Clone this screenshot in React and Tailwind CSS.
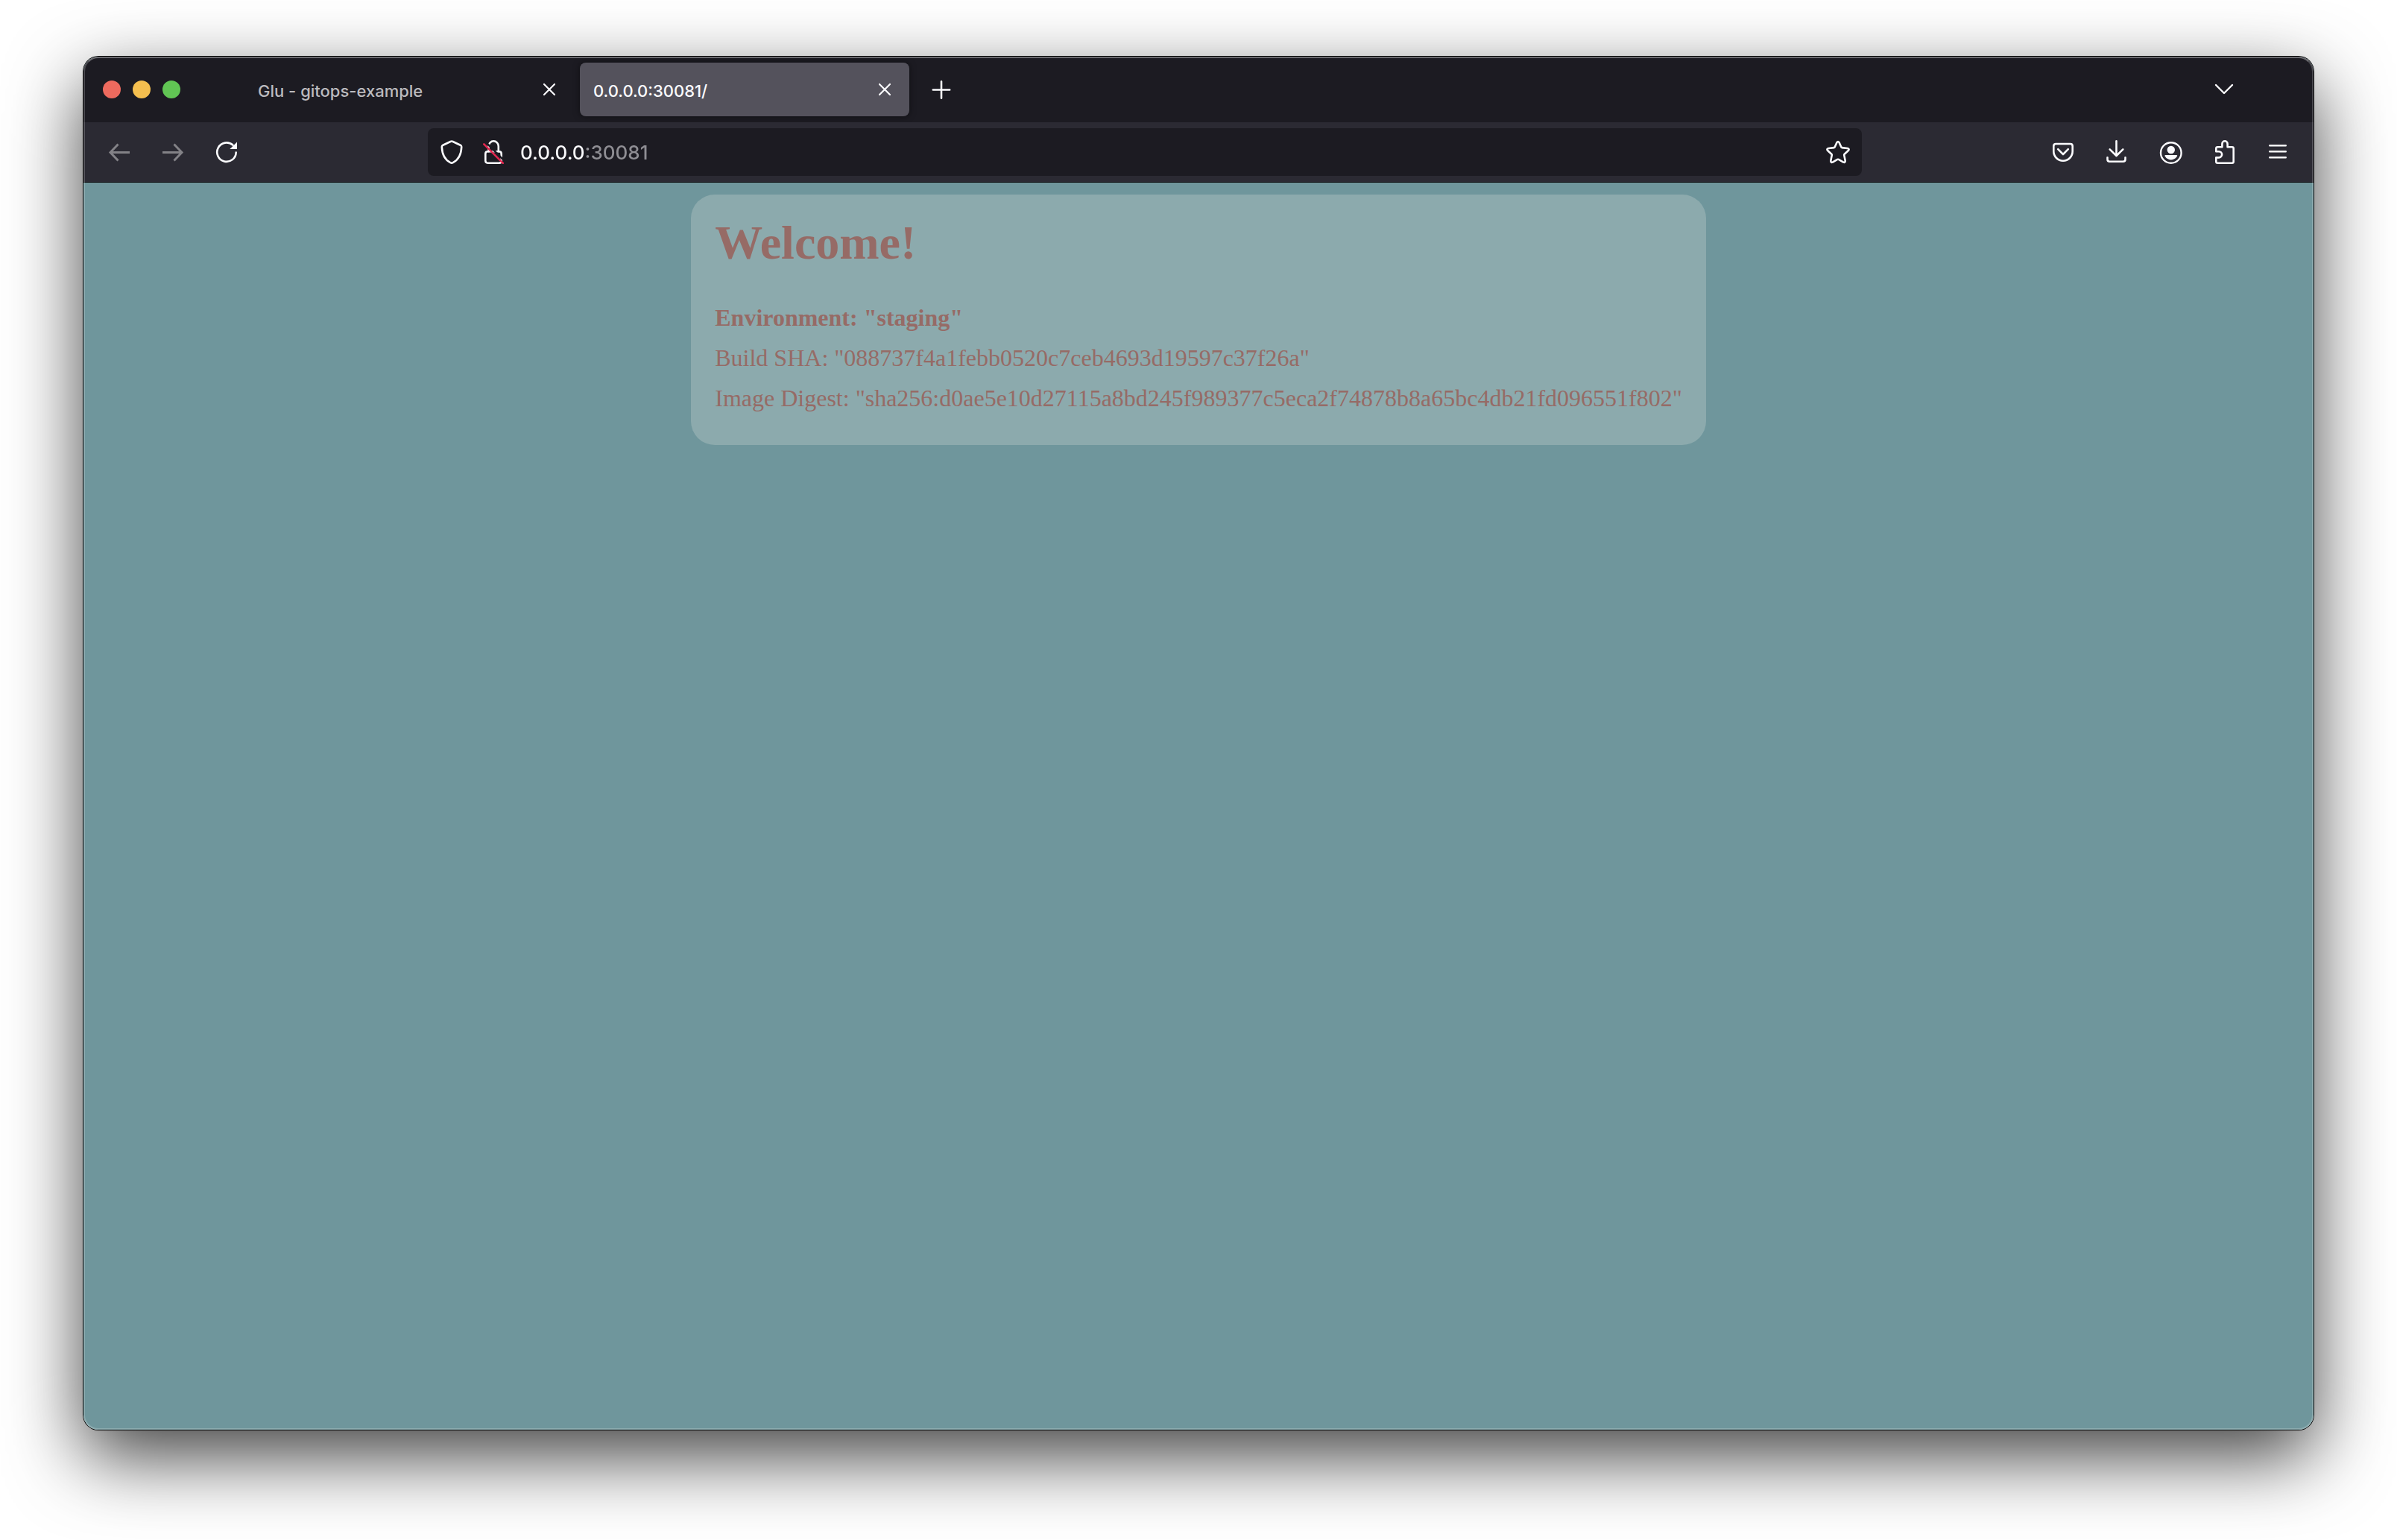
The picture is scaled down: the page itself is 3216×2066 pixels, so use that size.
import React, { useState } from "react";

function Icon({ children, width = 3, className = "" }) {
  return (
    <svg
      viewBox="0 0 32 32"
      className={`size-8 shrink-0 ${className}`}
      fill="none"
      stroke="currentColor"
      strokeWidth={width}
      strokeLinecap="round"
      strokeLinejoin="round"
      aria-hidden="true"
    >
      {children}
    </svg>
  );
}

const BackIcon = () => (
  <Icon>
    <g strokeLinecap="butt" strokeLinejoin="miter">
      <path d="M4 16.5H30" />
      <path d="M14.5 5.5L4 16.5L14.5 27.5" />
    </g>
  </Icon>
);
const ForwardIcon = () => (
  <Icon>
    <g strokeLinecap="butt" strokeLinejoin="miter">
      <path d="M2 16.5H28" />
      <path d="M17.5 5.5L28 16.5L17.5 27.5" />
    </g>
  </Icon>
);
const ReloadIcon = () => (
  <Icon width={2.6}>
    <path d="M28.7 16.5A12.7 12.7 0 1 1 24.4 6.6" />
    <path d="M30 2.4V12H20.4Z" fill="currentColor" stroke="none" />
  </Icon>
);
const ShieldIcon = () => (
  <Icon width={2.6}>
    <path d="M14.8 1.8Q16 1.1 17.2 1.8L27.7 6.7Q29.3 7.5 29.2 9.3C28.8 19.5 24.8 26.5 17.8 30.2Q16 31.1 14.2 30.2C7.2 26.5 3.2 19.5 2.8 9.3Q2.7 7.5 4.3 6.7Z" />
  </Icon>
);
const InsecureIcon = () => (
  <Icon width={2.6}>
    <path d="M9.6 15.3V8.2A6.6 6.9 0 0 1 22.8 8.2V15.3" />
    <path d="M8 15.3H23.7Q26.7 15.3 26.7 18.3V27.7Q26.7 30.7 23.7 30.7H8.3Q5.3 30.7 5.3 27.7V18.3Q5.3 15.3 8.3 15.3Z" />
    <path d="M5.5 2.5L31.5 28.5" stroke="#1c1b22" width="4" strokeLinecap="butt" />
    <path d="M3.3 5.3L28.8 30.8" stroke="#e22850" />
  </Icon>
);
const StarIcon = () => (
  <Icon width={2.6}>
    <path d="M14.4 3.2Q16 .9 17.6 3.2L20.3 9.3Q20.6 10 21.4 10.1L28.8 11Q31.8 11.8 29.8 14L24.7 18.7Q24.1 19.3 24.2 20.1L25.7 27.5Q25.8 30.6 23.2 29.6L16.8 25.9Q16 25.5 15.2 25.9L8.8 29.6Q6.2 30.6 6.3 27.5L7.8 20.1Q7.9 19.3 7.3 18.7L2.2 14Q.2 11.8 3.2 11L10.6 10.1Q11.4 10 11.7 9.3Z" />
  </Icon>
);
const PocketIcon = () => (
  <Icon width={2.6}>
    <path d="M6.3 5H25.7Q28.7 5 28.7 8V15A12.7 12.7 0 0 1 3.3 15V8Q3.3 5 6.3 5Z" />
    <path d="M9.2 12.2L16 19L22.8 12.2" />
  </Icon>
);
const DownloadIcon = () => (
  <Icon width={2.6}>
    <path d="M15.5 1.3V20.6M6.7 12.3L15.5 21L24.3 12.3" />
    <path d="M3.5 23.2V25.8Q3.5 28.8 6.5 28.8H24.5Q27.5 28.8 27.5 25.8V23.2" />
  </Icon>
);
const AccountIcon = () => (
  <Icon width={2.4}>
    <circle cx="16.8" cy="17" r="13.8" />
    <circle cx="16.8" cy="13" r="5.2" fill="currentColor" stroke="none" />
    <path d="M9.4 20H24.2Q25.8 20 25 21.6Q22.2 26.4 16.8 26.4T8.6 21.6Q7.8 20 9.4 20Z" fill="currentColor" stroke="none" />
  </Icon>
);
const ExtensionIcon = () => (
  <Icon width={2.6}>
    <path d="M5.3 15.2V11.2Q5.3 9.2 7.3 9.2H13.4V5A3.6 3.7 0 0 1 20.6 5V9.2H26.7Q28.7 9.2 28.7 11.2V28.7Q28.7 30.7 26.7 30.7H7.3Q5.3 30.7 5.3 28.7V23.4H9A4.1 4.1 0 0 0 9 15.2Z" />
  </Icon>
);
const MenuIcon = () => (
  <Icon width={2.6}>
    <path d="M5.3 7.3H26.7M5.3 15.3H26.7M5.3 23.3H26.7" />
  </Icon>
);
const CloseIcon = () => (
  <Icon width={2.2}>
    <path d="M9 9L23 23M23 9L9 23" />
  </Icon>
);
const PlusIcon = () => (
  <Icon width={2.6}>
    <path d="M16 5.3V27.7M4.8 16.5H27.2" />
  </Icon>
);
const ChevronIcon = () => (
  <Icon width={2.4}>
    <path d="M5 10L16 21L27 10" />
  </Icon>
);

function Tab({ title, active }) {
  return (
    <div
      className={`flex h-[72px] w-[442px] items-center justify-between rounded-lg pr-[17px] pl-[18px] ${
        active ? "bg-[#54525c] text-[#fbfbfe] shadow-[0_0_8px_rgba(0,0,0,0.5)]" : "text-[#bbbabe]"
      }`}
    >
      <button type="button" role="tab" aria-selected={active} className="pt-1 text-[22px] leading-8 font-medium">
        {title}
      </button>
      <button type="button" aria-label={`Close ${title}`} className="text-[#fbfbfe]">
        <CloseIcon />
      </button>
    </div>
  );
}

function ToolButton({ label, disabled, children }) {
  return (
    <button
      type="button"
      aria-label={label}
      disabled={disabled}
      className="flex h-16 w-[72px] items-center justify-center text-[#fbfbfe] disabled:text-[#838287]"
    >
      {children}
    </button>
  );
}

function TabBar() {
  return (
    <div className="flex h-[88px] items-center bg-[#1c1b22] pr-[104px] pl-[26px]">
      <div className="flex gap-4">
        <button type="button" aria-label="Close window" className="size-6 rounded-full bg-[#ed6a5e]" />
        <button type="button" aria-label="Minimize window" className="size-6 rounded-full bg-[#f5bf4f]" />
        <button type="button" aria-label="Zoom window" className="size-6 rounded-full bg-[#61c554]" />
      </div>
      <div role="tablist" className="ml-[86px] flex gap-2">
        <Tab title="Glu - gitops-example" active={false} />
        <Tab title="0.0.0.0:30081/" active={true} />
      </div>
      <button type="button" aria-label="New tab" className="ml-[27px] text-[#fbfbfe]">
        <PlusIcon />
      </button>
      <button type="button" aria-label="List all tabs" className="ml-auto text-[#fbfbfe]">
        <ChevronIcon />
      </button>
    </div>
  );
}

function Toolbar() {
  const [url, setUrl] = useState("0.0.0.0:30081");
  return (
    <div className="flex items-center border-b border-[#0c0c0d] bg-[#2b2a33] px-3 py-2">
      <ToolButton label="Back" disabled><BackIcon /></ToolButton>
      <ToolButton label="Forward" disabled><ForwardIcon /></ToolButton>
      <ToolButton label="Reload"><ReloadIcon /></ToolButton>
      <div className="mx-[234px] flex h-16 min-w-0 flex-1 items-center rounded-lg bg-[#1c1b22] px-4 text-[#fbfbfe]">
        <button type="button" aria-label="Tracking protection"><ShieldIcon /></button>
        <button type="button" aria-label="Connection is not secure" className="ml-6"><InsecureIcon /></button>
        <input
          type="text"
          aria-label="Address"
          value={url}
          onChange={(e) => setUrl(e.target.value)}
          className="ml-5 min-w-0 flex-1 bg-linear-to-r from-[#fbfbfe] from-[85px] to-[#8f8e94] to-[85px] bg-clip-text pt-0.5 text-[26px] leading-9 font-medium text-transparent caret-white outline-none"
        />
        <button type="button" aria-label="Bookmark this page"><StarIcon /></button>
      </div>
      <ToolButton label="Save to Pocket"><PocketIcon /></ToolButton>
      <ToolButton label="Downloads"><DownloadIcon /></ToolButton>
      <ToolButton label="Account"><AccountIcon /></ToolButton>
      <ToolButton label="Extensions"><ExtensionIcon /></ToolButton>
      <ToolButton label="Open application menu"><MenuIcon /></ToolButton>
    </div>
  );
}

export default function App() {
  return (
    <div className="flex min-h-screen flex-col bg-white px-28 pt-[76px] pb-[148px] font-['Inter','Liberation_Sans',sans-serif]">
      <div className="relative flex flex-1 flex-col rounded-[20px] shadow-[0_0_0_1px_#000,0_36px_100px_rgba(0,0,0,0.75)]">
        <div className="flex flex-1 flex-col overflow-hidden rounded-[20px] bg-[#6f969c]">
          <TabBar />
          <Toolbar />
          <main className="p-4 font-['Liberation_Serif',serif] text-[#966b66]">
            <section className="mx-auto w-fit rounded-[32px] bg-[#8caaad] px-8 pt-7 pb-9">
              <h1 className="mb-9 text-[64px] leading-[74px] font-bold">Welcome!</h1>
              <p className="text-[32px] leading-[54px] font-bold">Environment: "staging"</p>
              <p className="text-[32px] leading-[54px]">Build SHA: "088737f4a1febb0520c7ceb4693d19597c37f26a"</p>
              <p className="text-[32px] leading-[54px]">
                Image Digest: "sha256:d0ae5e10d27115a8bd245f989377c5eca2f74878b8a65bc4db21fd096551f802"
              </p>
            </section>
          </main>
        </div>
        <div className="pointer-events-none absolute inset-0 rounded-[20px] border-2 border-white/20 border-t-white/35" />
      </div>
    </div>
  );
}
